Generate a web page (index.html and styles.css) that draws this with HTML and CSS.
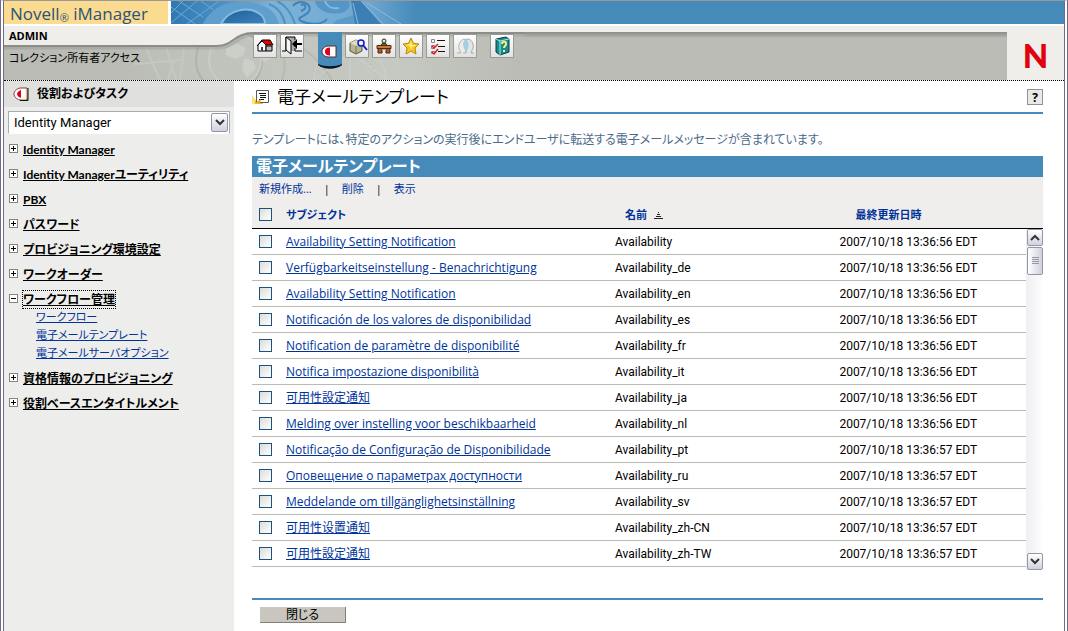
FILE: index.html
```html
<!DOCTYPE html>
<html lang="ja">
<head>
<meta charset="utf-8">
<title>Novell iManager</title>
<link rel="stylesheet" href="styles.css">
</head>
<body>
<div class="frame">
  <header class="masthead">
    <div class="brand-row">
      <div class="brand">Novell<sub>®</sub> iManager</div>
      <svg class="brand-art" width="340" height="23" viewBox="0 0 340 23" aria-hidden="true">
        <defs>
          <linearGradient id="blue" x1="0" x2="1"><stop offset="0" stop-color="#3078b2"/><stop offset=".15" stop-color="#4a90c4"/><stop offset=".3" stop-color="#7db2d8"/><stop offset=".58" stop-color="#6fa8d0"/><stop offset=".72" stop-color="#468aba"/></linearGradient>
          <linearGradient id="bowl" x1="0" x2="1" y1="0" y2="1"><stop offset="0" stop-color="#1d5f99"/><stop offset="1" stop-color="#3d85bb"/></linearGradient>
        </defs>
        <rect width="340" height="23" fill="url(#blue)"/>
        <path d="M0 6l24 17M8 0l24 16M30 0l14 10M0 22L26 0M16 23L48 0M0 12L12 0" stroke="#6da8d2" stroke-width="1" fill="none"/>
        <path d="M32 23C42 2 66-3 86 3c16 4 20 12 22 20z" fill="#5f9fcd"/>
        <path d="M50 23C58 8 78 5 89 13c4 3 5 6 5 10z" fill="url(#bowl)" stroke="#8bbce0" stroke-width="2"/>
        <path d="M98 3c8 3 14 10 16 20M106 0c8 4 14 10 18 23" stroke="#5092c4" stroke-width="2" fill="none"/>
        <path d="M122 5c4-7 20-4 16 5-3 6-14 6-8 10 8 4 22 4 26-2M130 4c6-2 6 4 0 6" stroke="#3f83b8" stroke-width="2" fill="none"/>
        <path d="M144 0c2 10 14 14 26 12 8-2 10-8 8-12z" fill="#5496c8"/>
        <path d="M154 0c2 6 8 8 14 7" stroke="#86b8dc" stroke-width="2" fill="none"/>
        <path d="M162 23c4-7 14-5 20-9l6 9z" fill="#5b9ac9"/>
        <path d="M180 0l4 23h26L190 0z" fill="#3c7fb5"/>
        <path d="M182 2l5 21M190 0l22 23M196 2l34 21" stroke="#8bbade" stroke-width="1" fill="none"/>
      </svg>
    </div>
    <div class="tool-row">
      <svg class="tool-art" width="520" height="54" viewBox="0 0 520 54" aria-hidden="true">
        <defs>
          <linearGradient id="fade" x1="0" x2="1"><stop offset="0" stop-color="#b9bbb4"/><stop offset=".22" stop-color="#b9bbb4"/><stop offset=".35" stop-color="#bfc1bb"/><stop offset=".75" stop-color="#c6c8c2"/><stop offset="1" stop-color="#b9bbb4"/></linearGradient>
        </defs>
        <rect y="6" width="520" height="48" fill="url(#fade)"/>
        <g fill="none" stroke="#c5c7c1" stroke-width="2">
          <path d="M142 22l14 32M162 20l10 34M130 38l50-4M170 34l-6 20M180 22l-4 32"/>
          <circle cx="225" cy="34" r="33" stroke="#b0b2ac"/><circle cx="231" cy="34" r="26" stroke="#c9cbc5"/>
          <path d="M266 12c14 8 18 26 12 42M280 12c24 10 40 28 48 42" stroke="#b7b9b3"/>
          <circle cx="346" cy="54" r="36" stroke-width="1" stroke="#ced0ca"/><circle cx="346" cy="54" r="26" stroke="#b9bbb5" stroke-dasharray="1 4"/><path d="M310 54l36-28 38 28M346 18v36" stroke-width="1" stroke="#ced0ca"/>
        </g>
        <path d="M222 22l10-5 10 5-3 8-8 3-9-4zM240 32l9 3 3 7-9 10-5-9zM252 20l12 3 4 9-8 4-8-7z" fill="#cccec8"/>
        <path d="M0 0H520V6H250C228 6 230 19 212 19H0z" fill="#efeeea"/>
        <path d="M520 7H250C230 7 230 20 212 20H0" fill="none" stroke="#8b8d88" stroke-width="2"/>
        <path d="M520 9H250C233 9 232 22 214 22H0" fill="none" stroke="#8b8d8855" stroke-width="3"/>
      </svg>
      <div class="user">
        <strong>ADMIN</strong>
        <span>コレクション所有者アクセス</span>
      </div>
      <nav class="tools">
        <button aria-label="ホーム"><svg viewBox="0 0 22 22"><path d="M4 10l4-4 4 4v6H4z" fill="#fff" stroke="#000"/><path d="M12 11h6v5h-6z" fill="#bbb" stroke="#000"/><path d="M8 5h8l3 5h-7L8 6l-5 5z" fill="#e80000" stroke="#000"/><path d="M7 16v-4h2v4z" fill="#444"/></svg></button>
        <button aria-label="終了"><svg viewBox="0 0 22 22"><path d="M7 2h7v14H7z" fill="#aaa"/><path d="M1 16h4V2h9v3M14 13v3h7" fill="none" stroke="#000"/><path d="M5 2l5 4v13l-5-4z" fill="#f4f4f4" stroke="#000"/><path d="M21 10h-5v4l-5-5 5-5v4h5z" fill="#000"/></svg></button>
        <button class="current" aria-label="役割およびタスク"><svg viewBox="0 0 24 38"><path d="M0 0h24v33c-5 4-19 4-24 0z" fill="#468aba"/><path d="M0 32c6 3 18 3 24 0v1c-6 5-18 5-24 0z" fill="#071522"/><path d="M18 14v11h-8c-8-1-8-10 0-11z" fill="#fff" stroke="#5b2a2a"/><path d="M7 19.500c0-3 2-4 5-4v8c-3 0-5-1-5-4z" fill="#e0001c"/></svg></button>
        <button aria-label="オブジェクトの表示"><svg viewBox="0 0 22 22"><path d="M4 8l6-3 6 3v8l-6 3-6-3z" fill="#b5b591" stroke="#55553c"/><path d="M4 8l6 3 6-3-6-3z" fill="#deddc0"/><path d="M10 11v8" stroke="#777754"/><circle cx="15" cy="8" r="3" fill="#dff" stroke="#1717c4" stroke-width="1.5"/><path d="M17 10l4 5" stroke="#1717c4" stroke-width="2"/></svg></button>
        <button aria-label="環境設定"><svg viewBox="0 0 22 22"><path d="M8 11c0-4 6-4 6 0z" fill="#5a7a3a" stroke="#222"/><circle cx="11" cy="6" r="2" fill="#fff48a" stroke="#222"/><path d="M5 13h4v5H5zM13 13h4v5h-4z" fill="#a75e28" stroke="#50280f"/><path d="M9 13h4v2H9z" fill="#d89a5c"/><path d="M4 10.500h14v3H4z" fill="#c77d38" stroke="#50280f"/></svg></button>
        <button aria-label="お気に入り"><svg viewBox="0 0 22 22"><path d="M11 3l2.400 5.300 5.600.7-4 4 1 6-5-3-5 3 1-6-4-4 5.600-.7z" fill="#f5c820" stroke="#b98908"/><path d="M11 5l1 5 5 0-5 2-1 3-1-4-4-1 4-1z" fill="#ffee83"/></svg></button>
        <button aria-label="タスク一覧"><svg viewBox="0 0 22 22"><path d="M4.500 4.500h3v3h-3zM4.500 10.500h3v3h-3zM4.500 16.500h3v2h-3z" fill="#fff" stroke="#888"/><path d="M10 5.500h8M11 11.500h7M11 16.500h7" stroke="#111" stroke-width="1"/><path d="M5 11l2 2 4-4M5 17l2 2 4-5" fill="none" stroke="#e21b1b" stroke-width="1.500"/></svg></button>
        <button aria-label="ユーザ"><svg viewBox="0 0 22 22"><path d="M3 18h4c-1-3-3-4-2-8 2-8 9-7 9-1 0 4-3 5-2 9h-3" fill="#ececec" stroke="#b2b2b2"/><path d="M20 18h-3c1-4 3-4 2-9-2-7-9-6-9 0 0 4 3 6 2 9" fill="#e4e4e4" stroke="#a8a8a8"/><ellipse cx="12" cy="10" rx="2.500" ry="5" fill="#9fd0e6"/></svg></button>
        <button class="apart" aria-label="ヘルプ"><svg viewBox="0 0 22 22"><path d="M5 4l10-2 3 2v13l-9 3-4-3z" fill="#168d8d" stroke="#073f46"/><path d="M5 4l4 2v14M9 6l9-2" fill="none" stroke="#b7e4df"/><path d="M11 9c0-3 5-3 4 0 0 2-2 2-2 4M13 15v2" fill="none" stroke="#f7ef80" stroke-width="2"/></svg></button>
      </nav>
      <div class="corner">N</div>
    </div>
  </header>

  <div class="columns">
    <aside class="sidebar">
      <h2 class="side-title"><svg width="16" height="14" viewBox="0 0 16 14"><path d="M14 1v12H7C-1 11-1 3 7 1z" fill="#fff" stroke="#8a3a2a"/><path d="M15 1v12.500H7" fill="none" stroke="#111"/><path d="M13 2v10H8" fill="none" stroke="#e8df99"/><path d="M4 7c0-2 2-3 4-4v8c-2-1-4-2-4-4z" fill="#d6001c"/></svg>役割およびタスク</h2>
      <label class="picker"><select aria-label="カテゴリ"><option>Identity Manager</option></select><span class="drop"><svg width="10" height="7" viewBox="0 0 10 7"><path d="M1 1l4 4 4-4" fill="none" stroke="#333" stroke-width="2"/></svg></span></label>
      <ul class="tree">
        <li><i class="box plus"></i><a href="#">Identity Manager</a></li>
        <li><i class="box plus"></i><a href="#">Identity Managerユーティリティ</a></li>
        <li><i class="box plus"></i><a href="#">PBX</a></li>
        <li><i class="box plus"></i><a href="#">パスワード</a></li>
        <li><i class="box plus"></i><a href="#">プロビジョニング環境設定</a></li>
        <li><i class="box plus"></i><a href="#">ワークオーダー</a></li>
        <li class="open"><i class="box"></i><a href="#">ワークフロー管理</a>
          <ul>
            <li><a href="#">ワークフロー</a></li>
            <li><a href="#">電子メールテンプレート</a></li>
            <li><a href="#">電子メールサーバオプション</a></li>
          </ul>
        </li>
        <li><i class="box plus"></i><a href="#">資格情報のプロビジョニング</a></li>
        <li><i class="box plus"></i><a href="#">役割ベースエンタイトルメント</a></li>
      </ul>
    </aside>

    <main class="content">
      <div class="page-head">
        <svg width="18" height="16" viewBox="0 0 18 16"><path d="M0 6l3 5 8 1v3H1z" fill="#f1bd27"/><path d="M0 6l3 5v4H0z" fill="#ffe46d"/><path d="M4.500 1.500h12v12h-12z" fill="#fff" stroke="#555863"/><path d="M7 4.500h7M8 6.500h6M8 8.500h6M7 10.500h5" stroke="#111"/><path d="M3 14l6-4-1 4z" fill="#e3a51b"/></svg>
        <h1>電子メールテンプレート</h1>
        <button class="help">?</button>
      </div>
      <p class="intro">テンプレートには、特定のアクションの実行後にエンドユーザに転送する電子メールメッセージが含まれています。</p>
      <section class="list">
        <h2>電子メールテンプレート</h2>
        <div class="actions"><a href="#">新規作成...</a><span>|</span><a href="#">削除</a><span>|</span><a href="#">表示</a></div>
        <div class="list-head">
          <table class="grid">
            <colgroup><col class="c-check"><col class="c-subject"><col class="c-name"><col></colgroup>
            <thead><tr><th><input type="checkbox" aria-label="すべて選択"></th><th>サブジェクト</th><th class="in-name">名前 <svg width="9" height="7" viewBox="0 0 9 7"><path d="M4 .5h1M3 2.500h3M2 4.500h5M0 6.500h9" stroke="#222"/></svg></th><th class="in-date">最終更新日時</th></tr></thead>
          </table>
        </div>
        <div class="list-body">
          <table class="grid">
            <colgroup><col class="c-check"><col class="c-subject"><col class="c-name"><col></colgroup>
            <tbody>
              <tr><td><input type="checkbox" aria-label="Availability"></td><td><a href="#">Availability Setting Notification</a></td><td>Availability</td><td>2007/10/18 13:36:56 EDT</td></tr>
              <tr><td><input type="checkbox" aria-label="Availability_de"></td><td><a href="#">Verfügbarkeitseinstellung - Benachrichtigung</a></td><td>Availability_de</td><td>2007/10/18 13:36:56 EDT</td></tr>
              <tr><td><input type="checkbox" aria-label="Availability_en"></td><td><a href="#">Availability Setting Notification</a></td><td>Availability_en</td><td>2007/10/18 13:36:56 EDT</td></tr>
              <tr><td><input type="checkbox" aria-label="Availability_es"></td><td><a href="#">Notificación de los valores de disponibilidad</a></td><td>Availability_es</td><td>2007/10/18 13:36:56 EDT</td></tr>
              <tr><td><input type="checkbox" aria-label="Availability_fr"></td><td><a href="#">Notification de paramètre de disponibilité</a></td><td>Availability_fr</td><td>2007/10/18 13:36:56 EDT</td></tr>
              <tr><td><input type="checkbox" aria-label="Availability_it"></td><td><a href="#">Notifica impostazione disponibilità</a></td><td>Availability_it</td><td>2007/10/18 13:36:56 EDT</td></tr>
              <tr><td><input type="checkbox" aria-label="Availability_ja"></td><td><a href="#">可用性設定通知</a></td><td>Availability_ja</td><td>2007/10/18 13:36:56 EDT</td></tr>
              <tr><td><input type="checkbox" aria-label="Availability_nl"></td><td><a href="#">Melding over instelling voor beschikbaarheid</a></td><td>Availability_nl</td><td>2007/10/18 13:36:56 EDT</td></tr>
              <tr><td><input type="checkbox" aria-label="Availability_pt"></td><td><a href="#">Notificação de Configuração de Disponibilidade</a></td><td>Availability_pt</td><td>2007/10/18 13:36:57 EDT</td></tr>
              <tr><td><input type="checkbox" aria-label="Availability_ru"></td><td><a href="#">Оповещение о параметрах доступности</a></td><td>Availability_ru</td><td>2007/10/18 13:36:57 EDT</td></tr>
              <tr><td><input type="checkbox" aria-label="Availability_sv"></td><td><a href="#">Meddelande om tillgänglighetsinställning</a></td><td>Availability_sv</td><td>2007/10/18 13:36:57 EDT</td></tr>
              <tr><td><input type="checkbox" aria-label="Availability_zh-CN"></td><td><a href="#">可用性设置通知</a></td><td>Availability_zh-CN</td><td>2007/10/18 13:36:57 EDT</td></tr>
              <tr><td><input type="checkbox" aria-label="Availability_zh-TW"></td><td><a href="#">可用性設定通知</a></td><td>Availability_zh-TW</td><td>2007/10/18 13:36:57 EDT</td></tr>
            </tbody>
          </table>
          <div class="scroll">
            <button aria-label="上へ"><svg width="10" height="7" viewBox="0 0 10 7"><path d="M1 6l4-4 4 4" fill="none" stroke="#333" stroke-width="2"/></svg></button>
            <div class="thumb"><svg width="7" height="8" viewBox="0 0 7 8"><path d="M0 .5h7M0 2.500h7M0 4.500h7M0 6.500h7" stroke="#9597a8"/></svg></div>
            <button class="down" aria-label="下へ"><svg width="10" height="7" viewBox="0 0 10 7"><path d="M1 1l4 4 4-4" fill="none" stroke="#333" stroke-width="2"/></svg></button>
          </div>
        </div>
      </section>
      <footer class="foot"><button class="close">閉じる</button></footer>
    </main>
  </div>
</div>
</body>
</html>
```

FILE: styles.css
```css
* { box-sizing: border-box; }
body {
  margin: 0;
  background: #fff;
  color: #000;
  font: 12px/16px "Open Sans", "Noto Sans CJK JP", sans-serif;
  font-feature-settings: "palt";
}
button { margin: 0; padding: 0; font: inherit; }
h1, h2, p, ul { margin: 0; padding: 0; }
ul { list-style: none; }
a { color: #003399; }

.frame {
  display: flex;
  flex-direction: column;
  min-height: 100vh;
  border: solid #6f6a85;
  border-width: 1px 4px 0;
  border-style: solid double;
  border-top-color: #999;
}

.brand-row { display: flex; height: 23px; background: #468aba; }
.brand {
  width: 167px;
  padding-left: 6px;
  border-right: 3px solid #fff;
  background: #fadb90;
  color: #2c5378;
  font: 17px/25px "Open Sans", sans-serif;
  white-space: nowrap;
}
.brand sub { font-size: 11px; line-height: 0; vertical-align: -2px; }

.tool-row {
  position: relative;
  display: flex;
  height: 57px;
  border-top: 2px solid #fff;
  border-bottom: 1px dotted #000;
  background: linear-gradient(#efeeea 6px, #8b8d88 6px, #9fa19b 9px, #b9bbb4 12px);
}
.tool-art { position: absolute; left: 0; top: 0; }
.user { position: relative; width: 249px; padding-left: 5px; }
.user strong, .user span { display: block; }
.user strong { font-size: 11px; line-height: 20px; }
.user span { font-size: 11px; line-height: 23px; }
.tools { position: relative; display: flex; gap: 3px; padding-top: 8px; }
.tools button {
  width: 24px;
  height: 24px;
  border: 1px solid #999b97;
  background: linear-gradient(#fff, #e2e2e2);
}
.tools svg { display: block; width: 22px; height: 22px; }
.tools .current { height: 38px; margin: -2px 0 0 11px; border: 0; background: none; }
.tools .current svg { width: 24px; height: 38px; }
.tools .apart { margin-left: 10px; }
.corner {
  position: relative;
  width: 57px;
  margin: 6px 0 0 auto;
  background: #efeeea;
  color: #e2000f;
  font: 900 33px/46px Lato, sans-serif;
  text-align: center;
}

.columns { display: flex; flex: 1; }
.sidebar { flex: none; width: 230px; background: #ededeb; }
.side-title {
  display: flex;
  align-items: center;
  gap: 8px;
  height: 26px;
  padding-left: 9px;
  background: #e0e0de;
  font-size: 12px;
}
.picker {
  display: flex;
  height: 23px;
  margin: 4px 4px 0;
  padding: 1px;
  border: 1px solid #a5acb2;
  border-bottom-color: #fff;
  background: #fff;
}
.picker select { flex: 1; appearance: none; border: 0; padding: 0 4px; background: #fff; color: #000; font: 13px Roboto, sans-serif; }
.drop, .scroll button, .thumb {
  display: flex;
  align-items: center;
  justify-content: center;
  border: 1px solid #9297a8;
  border-radius: 2px;
  background: linear-gradient(#fff, #d0d1de);
}
.drop { width: 17px; }

.tree { padding: 3px 0 0 5px; font-family: Lato, "Noto Sans CJK JP", sans-serif; }
.tree > li { display: grid; grid-template-columns: 14px auto; justify-content: start; line-height: 17px; padding: 4px 0; }
.tree > li > a { justify-self: start; color: #000; font-weight: bold; }
.tree > .open > a { outline: 1px dotted #000; }
.tree ul { grid-column: 2; padding-left: 13px; font-size: 11px; }
.tree ul li { line-height: 18px; }
.box {
  width: 9px;
  height: 9px;
  margin-top: 3px;
  border: 1px solid #848484;
  background: linear-gradient(#000, #000) center / 5px 1px no-repeat, #fff;
}
.plus { background: linear-gradient(#000, #000) center / 5px 1px no-repeat, linear-gradient(#000, #000) center / 1px 5px no-repeat, #fff; }

.content { flex: 1; min-width: 0; padding: 1px 21px 0 18px; }
.page-head { display: flex; align-items: center; height: 32px; border-bottom: 2px solid #468aba; }
.page-head h1 { margin-left: 7px; font-size: 17px; font-weight: normal; line-height: 24px; }
.help { width: 16px; height: 16px; margin-left: auto; border: 1px solid #92938f; background: #e9e9e7; font-size: 12px; font-weight: bold; line-height: 13px; }
.intro { padding: 18px 0 8px; color: #4b6a8a; font-size: 12px; }
.list h2 { padding-left: 4px; background: #468aba; color: #fff; font-size: 16px; line-height: 21px; }
.actions { display: flex; gap: 12px; padding: 4px 7px; background: #efeeec; font-size: 11px; }
.actions a { text-decoration: none; }
.list-head { padding-right: 17px; border-bottom: 1px solid #000; background: #efeeec; }
.grid { width: 100%; border-collapse: separate; border-spacing: 0; table-layout: fixed; }
.c-check { width: 34px; }
.c-subject { width: 42.5%; }
.c-name { width: 29%; }
.grid th { height: 27px; padding: 0; color: #003399; font-size: 11px; text-align: left; }
.grid .in-name { padding-left: 10px; }
.grid .in-name svg { margin-left: 4px; }
.grid .in-date { padding-left: 16px; }
.grid td { height: 26px; padding: 0; border-bottom: 1px solid #b9bbb4; white-space: nowrap; }
.grid td:nth-child(n+3) { font-family: Roboto, sans-serif; }
.grid input {
  display: block;
  appearance: none;
  width: 13px;
  height: 13px;
  margin: 0 0 0 7px;
  border: 1px solid #1d5280;
  background: linear-gradient(135deg, #dcdcd7, #fff);
}
.list-body { display: flex; align-items: flex-start; }
.scroll { display: flex; flex: none; flex-direction: column; width: 17px; height: 341px; padding-left: 1px; background: linear-gradient(90deg, #eeeef3, #fefefe); }
.scroll button { width: 16px; height: 17px; }
.thumb { width: 16px; height: 28px; margin-top: 1px; background: linear-gradient(90deg, #fff, #cfd0dd); }
.scroll .down { margin-top: auto; }
.foot { margin-top: 28px; padding: 7px 8px; border-top: 2px solid #468aba; }
.close {
  display: block;
  width: 86px;
  height: 16px;
  border: solid #848078;
  border-width: 0 1px 1px 0;
  background: #c9c6bf;
  font-size: 12px;
  line-height: 14px;
}
```
